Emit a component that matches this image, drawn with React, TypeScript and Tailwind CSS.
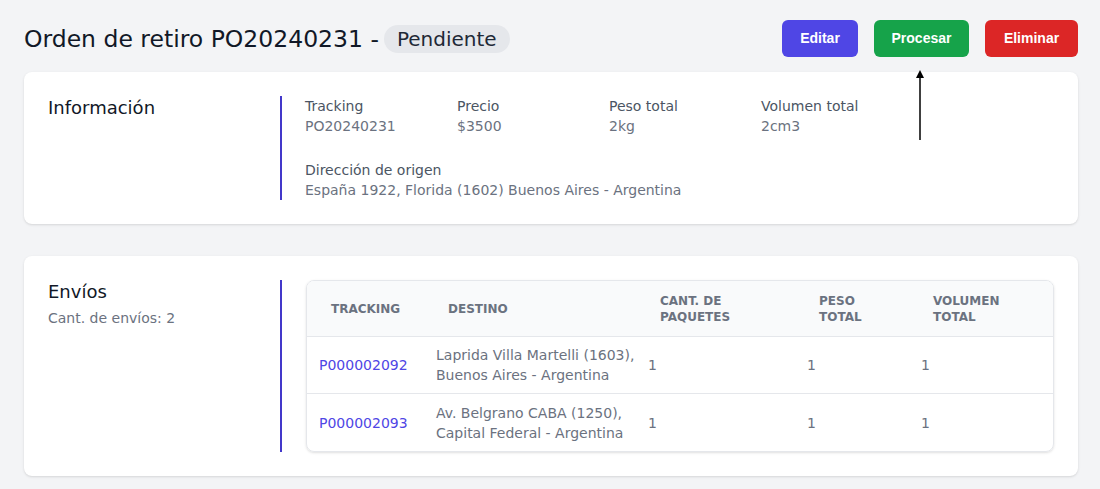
import React from "react";

const font = { fontFamily: '"DejaVu Sans", "Noto Sans", sans-serif' };

const info = [
  { label: "Tracking", value: "PO20240231" },
  { label: "Precio", value: "$3500" },
  { label: "Peso total", value: "2kg" },
  { label: "Volumen total", value: "2cm3" },
];

const envios = [
  { tracking: "P000002092", destino: ["Laprida Villa Martelli (1603),", "Buenos Aires - Argentina"] },
  { tracking: "P000002093", destino: ["Av. Belgrano CABA (1250),", "Capital Federal - Argentina"] },
];

const cols = "grid grid-cols-[117px_212px_159px_114px_1fr]";

export default function App() {
  return (
    <div className="relative min-h-[489px] w-[1100px] bg-[#f3f4f6] pl-6 pr-[22px] pt-5 pb-3" style={font}>
      {/* Header */}
      <div className="flex h-[37px] items-center justify-between">
        <div className="flex items-center">
          <h1 className="text-[23.5px] leading-8 text-[#111827]">Orden de retiro PO20240231 -</h1>
          <span className="ml-[5px] rounded-full bg-[#e5e7eb] px-[13px] text-[20px] leading-7 text-[#1f2937]">
            Pendiente
          </span>
        </div>
        <div
          className="flex gap-4 text-[14px] font-bold text-white"
          style={{ fontFamily: '"Liberation Sans", Arial, sans-serif' }}
        >
          <button className="h-[37px] w-[76px] rounded-md bg-[#4f46e5]">Editar</button>
          <button className="h-[37px] w-[95px] rounded-md bg-[#16a34a]">Procesar</button>
          <button className="h-[37px] w-[93px] rounded-md bg-[#dc2626]">Eliminar</button>
        </div>
      </div>

      {/* Información */}
      <div className="mt-[15px] flex rounded-lg bg-white p-6 shadow-sm">
        <div className="w-[232px] text-[18px] leading-6 text-[#111827]">Información</div>
        <div className="flex-1 border-l-2 border-[#4338ca] pl-[23px] text-[14px] leading-5">
          <div className="grid grid-cols-[152px_152px_152px_152px]">
            {info.map((i) => (
              <div key={i.label}>
                <div className="text-[#4b5563]">{i.label}</div>
                <div className="text-[#6b7280]">{i.value}</div>
              </div>
            ))}
          </div>
          <div className="mt-6">
            <div className="text-[#4b5563]">Dirección de origen</div>
            <div className="text-[#6b7280]">España 1922, Florida (1602) Buenos Aires - Argentina</div>
          </div>
        </div>
      </div>

      {/* Envíos */}
      <div className="mt-8 flex rounded-lg bg-white p-6 shadow-sm">
        <div className="w-[232px]">
          <div className="text-[18px] leading-6 text-[#111827]">Envíos</div>
          <div className="mt-1 text-[14px] leading-5 text-[#6b7280]">Cant. de envíos: 2</div>
        </div>
        <div className="flex-1 border-l-2 border-[#4338ca] pl-6">
          <div className="overflow-hidden rounded-lg border border-[#e5e7eb] shadow-sm">
            <div className={`${cols} h-[56px] items-center border-b border-[#e5e7eb] bg-[#f9fafb] text-[12px] font-semibold leading-4 text-[#6b7280]`}>
              <div className="px-6">TRACKING</div>
              <div className="px-6">DESTINO</div>
              <div className="px-6">CANT. DE<br />PAQUETES</div>
              <div className="px-6">PESO<br />TOTAL</div>
              <div className="px-6">VOLUMEN<br />TOTAL</div>
            </div>
            {envios.map((e, idx) => (
              <div
                key={e.tracking}
                className={`${cols} h-[57px] items-center text-[14px] leading-5 ${idx === 0 ? "border-b border-[#e5e7eb]" : ""}`}
              >
                <div className="px-3 text-[#4f46e5]">{e.tracking}</div>
                <div className="whitespace-nowrap px-3 text-[#6b7280]">
                  {e.destino[0]}
                  <br />
                  {e.destino[1]}
                </div>
                <div className="px-3 text-[#6b7280]">1</div>
                <div className="px-3 text-[#6b7280]">1</div>
                <div className="px-3 text-[#6b7280]">1</div>
              </div>
            ))}
          </div>
        </div>
      </div>

      {/* Arrow pointing to Procesar */}
      <svg className="absolute left-[914px] top-[70px]" width="12" height="72" viewBox="0 0 12 72">
        <line x1="6" y1="6" x2="6" y2="70" stroke="black" strokeWidth="1.5" />
        <path d="M6 0 L10 8 L2 8 Z" fill="black" />
      </svg>
    </div>
  );
}
